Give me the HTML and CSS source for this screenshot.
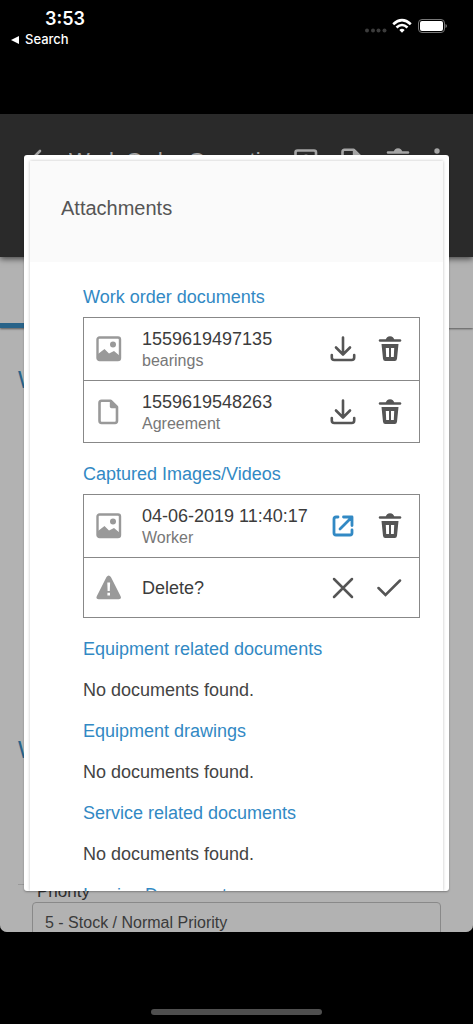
FILE: index.html
```html
<!DOCTYPE html>
<html lang="en">
<head>
  <meta charset="UTF-8">
  <meta name="viewport" content="width=device-width, initial-scale=1.0">
  <title>Attachments</title>
  <link rel="stylesheet" href="styles.css">
</head>
<body>

  <!-- Shared icons -->
  <svg class="sprite" aria-hidden="true">
    <symbol id="icon-image" viewBox="0 0 26 26">
      <rect x="1.5" y="1.5" width="22.5" height="22.5" rx="2" fill="none" stroke="currentColor" stroke-width="2.4"/>
      <circle cx="17" cy="8.5" r="3" fill="currentColor"/>
      <path d="M2 18 L8.5 13 L13 17.5 L18 15 L24 20 V22.5 Q24 24 22.5 24 H3.5 Q2 24 2 22.5 Z" fill="currentColor"/>
    </symbol>
    <symbol id="icon-portrait" viewBox="0 0 26 26">
      <rect x="2.5" y="2.5" width="20.5" height="20.5" rx="2" fill="none" stroke="currentColor" stroke-width="2.6"/>
      <circle cx="13" cy="9.5" r="3" fill="currentColor"/>
      <path d="M6 20 Q7 14 13 14 Q19 14 20 20 Z" fill="currentColor"/>
    </symbol>
    <symbol id="icon-doc" viewBox="0 0 26 26">
      <path d="M5.5 1.700 H14.500 L21 8 V21.500 Q21 24 19 24 H5.500 Q3.500 24 3.500 21.500 V4 Q3.500 1.700 5.500 1.700 Z" fill="none" stroke="currentColor" stroke-width="2.600" stroke-linejoin="round"/>
      <path d="M13.800 1 V7.500 Q13.800 9.200 15.500 9.200 H22 V7.800 L15.500 1 Z" fill="currentColor"/>
    </symbol>
    <symbol id="icon-download" viewBox="0 0 26 26">
      <path d="M13 1.500 V18 M6 11.500 L13 18.500 L20 11.500 M1.800 19 V21.500 Q1.800 24 4.300 24 H21.700 Q24.200 24 24.200 21.500 V19" fill="none" stroke="currentColor" stroke-width="2.600" stroke-linecap="round" stroke-linejoin="round"/>
    </symbol>
    <symbol id="icon-trash" viewBox="0 0 26 26">
      <path d="M3 4.500 H23" stroke="currentColor" stroke-width="2.500" stroke-linecap="round"/>
      <path d="M8.500 4.500 Q9.500 0.300 13 0.300 Q16.500 0.300 17.500 4.500 Z" fill="currentColor"/>
      <path fill-rule="evenodd" d="M4.500 8 H21.500 L20 22.800 Q19.700 25 17.800 25 H8.200 Q6.300 25 6 22.800 Z M8.800 12 L9.200 21 H12 V12 Z M14 12 V21 H16.800 L17.200 12 Z" fill="currentColor"/>
    </symbol>
    <symbol id="icon-open" viewBox="0 0 26 26">
      <path d="M8 4 H6 Q4 4 4 6 V20 Q4 22 6 22 H20 Q22 22 22 20 V17 M10 16 L21 5 M13.500 4 H22 V12.500" fill="none" stroke="currentColor" stroke-width="2.800" stroke-linecap="round" stroke-linejoin="round"/>
    </symbol>
    <symbol id="icon-warning" viewBox="0 0 26 26">
      <path fill-rule="evenodd" d="M10.500 2 Q12.700 -1 14.900 2 L24.500 21 Q26 24 22.800 24.200 H2.600 Q-0.600 24 0.900 21 Z M11.300 7.500 L11.600 16 H13.800 L14.100 7.500 Z M11.400 17.800 V20.500 H14 V17.800 Z" fill="currentColor"/>
    </symbol>
    <symbol id="icon-close" viewBox="0 0 26 26">
      <path d="M4 4 L22 22 M22 4 L4 22" stroke="currentColor" stroke-width="2.500" stroke-linecap="round"/>
    </symbol>
    <symbol id="icon-check" viewBox="0 0 26 26">
      <path d="M1.500 13 L8.500 20 L23 5.500" fill="none" stroke="currentColor" stroke-width="2.500" stroke-linecap="round"/>
    </symbol>
  </svg>

  <div class="status-bar">
    <div class="status-left">
      <div class="time">3:53</div>
      <a class="back-app" href="#"><svg width="8" height="8" viewBox="0 0 8 8"><path d="M0 4 L8 0 V8 Z" fill="#fff"/></svg>Search</a>
    </div>
    <svg class="status-icons" width="83" height="16" viewBox="0 0 83 16" aria-hidden="true">
      <g fill="#3c3c3c">
        <circle cx="3" cy="12.500" r="2"/><circle cx="9" cy="12.500" r="2"/><circle cx="14.500" cy="12.500" r="2"/><circle cx="20.500" cy="12.500" r="2"/>
      </g>
      <g fill="none" stroke="#fff" stroke-width="2.600">
        <path d="M29.200 6.200 Q38 -1.800 46.800 6.200"/>
        <path d="M32.500 9.500 Q38 4.500 43.500 9.500"/>
      </g>
      <path d="M35.300 12 Q38 9.700 40.700 12 L38 14.800 Z" fill="#fff"/>
      <rect x="54.500" y="1.500" width="26" height="13" rx="3.500" fill="none" stroke="#777"/>
      <rect x="56" y="3" width="23" height="10" rx="2" fill="#fff"/>
      <path d="M81.500 6 Q83 6.500 83 8 Q83 9.500 81.500 10 Z" fill="#777"/>
    </svg>
  </div>

  <main class="app">
    <header class="app-header">
      <svg class="app-back" width="24" height="24" viewBox="0 0 24 24"><path d="M13 2 L3 12 L13 22" fill="none" stroke="currentColor" stroke-width="2.600" stroke-linecap="round"/></svg>
      <div class="app-title">Work Order Operation</div>
      <div class="app-actions">
        <svg width="26" height="26"><use href="#icon-portrait"/></svg>
        <svg width="26" height="26"><use href="#icon-doc"/></svg>
        <svg width="26" height="26"><use href="#icon-trash"/></svg>
        <svg width="12" height="26" viewBox="0 0 12 26" fill="currentColor"><circle cx="6" cy="3" r="2.700"/><circle cx="6" cy="12" r="2.700"/><circle cx="6" cy="21" r="2.700"/></svg>
      </div>
    </header>
    <div class="app-tabs"><div class="app-tab"></div></div>
    <div class="app-section">W</div>
    <div class="app-section app-section-last">W</div>
    <div class="app-field">
      <label for="priority">Priority</label>
      <input id="priority" type="text" value="5 - Stock / Normal Priority" readonly>
    </div>

    <div class="backdrop"></div>

    <section class="modal" role="dialog" aria-labelledby="modal-title">
      <div class="modal-sheet">
        <header class="modal-header">
          <h1 id="modal-title">Attachments</h1>
        </header>
        <div class="modal-body">
          <h2>Work order documents</h2>
          <ul class="file-list">
            <li class="file">
              <svg class="file-icon"><use href="#icon-image"/></svg>
              <div class="file-text">
                <div class="file-name">1559619497135</div>
                <div class="file-desc">bearings</div>
              </div>
              <button class="action" aria-label="Download"><svg><use href="#icon-download"/></svg></button>
              <button class="action" aria-label="Delete"><svg><use href="#icon-trash"/></svg></button>
            </li>
            <li class="file">
              <svg class="file-icon"><use href="#icon-doc"/></svg>
              <div class="file-text">
                <div class="file-name">1559619548263</div>
                <div class="file-desc">Agreement</div>
              </div>
              <button class="action" aria-label="Download"><svg><use href="#icon-download"/></svg></button>
              <button class="action" aria-label="Delete"><svg><use href="#icon-trash"/></svg></button>
            </li>
          </ul>

          <h2>Captured Images/Videos</h2>
          <ul class="file-list">
            <li class="file">
              <svg class="file-icon"><use href="#icon-image"/></svg>
              <div class="file-text">
                <div class="file-name">04-06-2019 11:40:17</div>
                <div class="file-desc">Worker</div>
              </div>
              <button class="action action-open" aria-label="Open"><svg><use href="#icon-open"/></svg></button>
              <button class="action" aria-label="Delete"><svg><use href="#icon-trash"/></svg></button>
            </li>
            <li class="file file-confirm">
              <svg class="file-icon"><use href="#icon-warning"/></svg>
              <div class="file-text">
                <div class="file-name">Delete?</div>
              </div>
              <button class="action" aria-label="Cancel"><svg><use href="#icon-close"/></svg></button>
              <button class="action" aria-label="Confirm"><svg><use href="#icon-check"/></svg></button>
            </li>
          </ul>

          <h2>Equipment related documents</h2>
          <p>No documents found.</p>
          <h2>Equipment drawings</h2>
          <p>No documents found.</p>
          <h2>Service related documents</h2>
          <p>No documents found.</p>
          <h2>Invoice Documents</h2>
        </div>
      </div>
    </section>
  </main>

  <div class="home-area"><div class="home-bar"></div></div>

</body>
</html>
```
FILE: styles.css
```css
* {
  box-sizing: border-box;
}

body {
  margin: 0;
  height: 100vh;
  display: flex;
  flex-direction: column;
  background: #000;
  font-family: "Liberation Sans", Arial, sans-serif;
  font-size: 18px;
  line-height: 20px;
  color: #444;
}

.sprite {
  position: absolute;
  width: 0;
  height: 0;
}

/* Phone status bar */
.status-bar {
  height: 114px;
  flex: none;
  display: flex;
  justify-content: space-between;
  padding: 8px 26px 0 11px;
  color: #fff;
  font-family: Inter, sans-serif;
}

.time {
  padding-left: 34px;
  font-size: 18px;
  font-weight: 600;
  line-height: 21px;
}

.back-app {
  display: flex;
  align-items: center;
  gap: 6px;
  font-size: 13px;
  font-weight: 500;
  line-height: 21px;
  color: #fff;
  text-decoration: none;
}

.status-icons {
  margin-top: 10px;
}

/* Page behind the dialog */
.app {
  position: relative;
  flex: 1;
  min-height: 0;
  overflow: hidden;
  background: #fff;
  border-radius: 0 0 7px 7px;
}

.app-header {
  position: relative;
  height: 143px;
  display: flex;
  align-items: flex-start;
  gap: 18px;
  padding: 34px 30px 0 27px;
  background: #3d3d3d;
  color: #eee;
  box-shadow: 0 2px 6px rgba(0, 0, 0, 0.6);
}

.app-back {
  flex: none;
  margin-top: 1px;
}

.app-title {
  flex: 1;
  min-width: 0;
  overflow: hidden;
  white-space: nowrap;
  font-size: 22px;
  line-height: 26px;
}

.app-actions {
  display: flex;
  gap: 20px;
}

.app-tabs {
  height: 71px;
  display: flex;
  align-items: flex-end;
  box-shadow: 0 1px 2px rgba(0, 0, 0, 0.5);
}

.app-tab {
  width: 50%;
  height: 5px;
  background: #3a8fc4;
}

.app-section {
  height: 370px;
  padding: 38px 18px 0;
  font-size: 23px;
  line-height: 28px;
  color: #3a8fc4;
}

.app-section-last {
  height: 187px;
  margin: 0 32px 0 18px;
  padding: 38px 0 0;
  border-bottom: 1px solid #ddd;
}

.app-field {
  margin: -3px 32px 0;
}

.app-field label {
  display: block;
  padding-left: 5px;
  font-size: 17px;
  line-height: 20px;
}

.app-field input {
  width: 100%;
  height: 42px;
  padding: 0 12px;
  border: 1px solid #c4c4c4;
  border-radius: 4px;
  background: none;
  font: inherit;
  font-size: 16px;
  color: #555;
}

.backdrop {
  position: absolute;
  inset: 0;
  background: rgba(0, 0, 0, 0.3);
}

/* Dialog */
.modal {
  position: absolute;
  inset: 41px 24px;
  padding: 6px 6px 0;
  overflow: hidden;
  background: #fff;
  border-radius: 3px;
  box-shadow: 0 1px 2px rgba(0, 0, 0, 0.3);
}

.modal-sheet {
  height: 100%;
  background: #fff;
  box-shadow: 0 0 3px rgba(0, 0, 0, 0.25);
}

.modal-header {
  display: flex;
  align-items: center;
  height: 101px;
  padding: 0 31px 8px;
  background: #fafafa;
}

.modal-header h1 {
  margin: 0;
  font-size: 20px;
  font-weight: normal;
  line-height: 24px;
  color: #555;
}

.modal-body {
  padding: 25px 23px 0 53px;
}

.modal-body h2 {
  margin: 0;
  font-size: 18px;
  font-weight: normal;
  line-height: 20px;
  color: #3289c4;
}

.modal-body p {
  margin: 21px 0;
}

.file-list {
  margin: 10px 0 21px;
  padding: 0;
  list-style: none;
  border: 1px solid #888;
}

.file {
  display: flex;
  align-items: center;
  height: 62px;
  padding: 0 16px 0 12px;
}

.file + .file {
  border-top: 1px solid #888;
}

.file-confirm {
  height: 60px;
}

.file-icon {
  flex: none;
  width: 26px;
  height: 26px;
  color: #999;
}

.file-text {
  flex: 1;
  min-width: 0;
  padding: 2px 0 0 20px;
  line-height: 21px;
  white-space: nowrap;
}

.file-name {
  color: #3c3c3c;
}

.file-desc {
  font-size: 16px;
  color: #777;
}

.action {
  flex: none;
  width: 26px;
  height: 26px;
  padding: 0;
  border: 0;
  background: none;
  color: #555;
}

.action + .action {
  margin-left: 21px;
}

.action svg {
  display: block;
  width: 26px;
  height: 26px;
}

.action-open {
  color: #3289c4;
}

/* Home indicator */
.home-area {
  flex: none;
  height: 92px;
  display: flex;
  align-items: flex-end;
  justify-content: center;
  padding-bottom: 9px;
}

.home-bar {
  width: 36%;
  height: 6px;
  border-radius: 3px;
  background: #4f4f4f;
}
```
